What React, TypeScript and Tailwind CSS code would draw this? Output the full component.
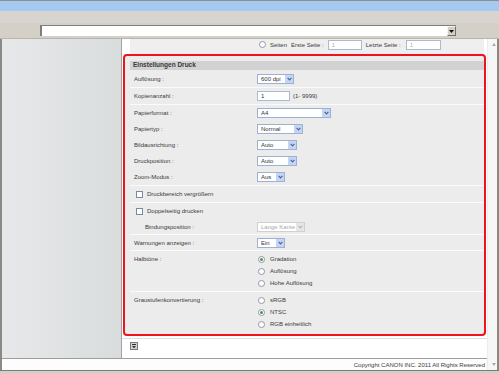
import clsx from "clsx";
import type { ReactNode } from "react";

function Chevron({ color }: { color: string }) {
  return (
    <svg width="5" height="4" viewBox="0 0 5 4">
      <path d="M0.6 0.8 L2.5 2.8 L4.4 0.8" fill="none" stroke={color} strokeWidth="1.2" />
    </svg>
  );
}

function Select({ value, width, disabled }: { value: string; width: string; disabled?: boolean }) {
  return (
    <div
      className={clsx(
        "flex h-[10px] border bg-white",
        width,
        disabled ? "border-[#d0d0d0] text-[#a8a8a8]" : "border-[#9db1d2] text-[#333]"
      )}
    >
      <span className="flex flex-1 items-center pl-[3px]">{value}</span>
      <span className={clsx("flex w-[8px] items-center justify-center", disabled ? "bg-[#e6e6e6]" : "bg-[#c6d5f4]")}>
        <Chevron color={disabled ? "#b4b4b4" : "#4b64a0"} />
      </span>
    </div>
  );
}

function Input({ value, width, muted }: { value: string; width: string; muted?: boolean }) {
  return (
    <div
      className={clsx(
        "flex h-[10px] items-center border border-[#a9bad4] bg-white pl-[3px]",
        width,
        muted ? "text-[#b0b0b0]" : "text-[#333]"
      )}
    >
      {value}
    </div>
  );
}

function Radio({ checked }: { checked?: boolean }) {
  return (
    <span className="flex h-[7px] w-[7px] shrink-0 items-center justify-center rounded-full border border-[#8e98a6] bg-white">
      {checked && <span className="h-[3px] w-[3px] rounded-full bg-[#3f9a45]" />}
    </span>
  );
}

function Checkbox() {
  return <span className="h-[7px] w-[7px] shrink-0 border border-[#7c8aa0] bg-white" />;
}

function Row({ label, h, indent, children }: { label: string; h: string; indent?: boolean; children?: ReactNode }) {
  return (
    <div className={clsx("flex items-center", h)}>
      <span className={clsx("w-[127px] shrink-0", indent ? "pl-[15px]" : "pl-[4px]")}>{label}</span>
      {children}
    </div>
  );
}

function RadioLine({ label, checked }: { label: string; checked?: boolean }) {
  return (
    <div className="flex h-[12px] items-center gap-[5px] pl-[1px]">
      <Radio checked={checked} />
      <span>{label}</span>
    </div>
  );
}

function Section({ className, children }: { className?: string; children: ReactNode }) {
  return <div className={clsx("border-b border-[#fbfbfb]", className)}>{children}</div>;
}

export default function App() {
  return (
    <div className="flex h-[374px] w-[499px] flex-col overflow-hidden bg-[#d4d0c8] font-['Liberation_Sans',Arial,sans-serif] text-[6px] leading-none text-[#3a3a3a]">
      <div className="h-[1px] bg-[#8f8f8f]" />
      <div className="h-[10px] bg-[#a6c9ef]" />
      <div className="h-[12px] bg-[#d8d4cf]" />

      {/* address select */}
      <div className="flex h-[16px] items-center border-b border-[#b9b5ae] pl-[40px]">
        <div className="flex h-[11px] w-[416px] border-l-2 border-t border-[#7d7d7d] bg-white">
          <div className="flex-1" />
          <div className="flex w-[9px] items-center justify-center border border-[#f4f4f4] border-b-[#6f6f6f] border-r-[#6f6f6f] bg-[#d4d0c8]">
            <svg width="5" height="3" viewBox="0 0 5 3">
              <path d="M0 0 H5 L2.5 3 Z" fill="#111" />
            </svg>
          </div>
        </div>
      </div>

      <div className="flex flex-1 border-x-2 border-[#8a8984]">
        <div className="flex flex-1 flex-col">
          <div className="flex flex-1">
            {/* left navigation */}
            <div className="w-[120px] border-r border-[#a3a3a3] bg-gradient-to-r from-[#e6e8ea] to-[#d9dcdd]" />

            {/* content */}
            <div className="flex flex-1 flex-col bg-white">
              <div className="ml-[8px] mr-[3px] h-[15px] bg-[#efefef]">
                <div className="flex h-[11px] items-center">
                  <span className="w-[127px] shrink-0" />
                  <span className="ml-[2px]">
                    <Radio />
                  </span>
                  <span className="ml-[4px]">Seiten</span>
                  <span className="ml-[4px]">Erste Seite :</span>
                  <span className="ml-[4px]">
                    <Input value="1" width="w-[34px]" muted />
                  </span>
                  <span className="ml-[4px]">Letzte Seite :</span>
                  <span className="ml-[5px]">
                    <Input value="1" width="w-[35px]" muted />
                  </span>
                </div>
              </div>

              {/* print settings */}
              <div className="ml-[1px] mr-[1px] flex h-[282px] flex-col rounded-[4px] border-2 border-[#f0131d] bg-[#ececec] pl-[5px] pt-[5px]">
                <div className="flex h-[9px] items-center bg-[#d2d2d2] pl-[3px] text-[6.5px] font-bold text-[#383838]">
                  Einstellungen Druck
                </div>
                <Section>
                  <Row label="Auflösung :" h="h-[17px]">
                    <Select value="600 dpi" width="w-[37px]" />
                  </Row>
                </Section>
                <Section>
                  <Row label="Kopienanzahl :" h="h-[16px]">
                    <Input value="1" width="w-[33px]" />
                    <span className="ml-[3px]">(1- 9999)</span>
                  </Row>
                </Section>
                <Section>
                  <Row label="Papierformat :" h="h-[16px]">
                    <Select value="A4" width="w-[74px]" />
                  </Row>
                  <Row label="Papiertyp :" h="h-[16px]">
                    <Select value="Normal" width="w-[46px]" />
                  </Row>
                  <Row label="Bildausrichtung :" h="h-[16px]">
                    <Select value="Auto" width="w-[40px]" />
                  </Row>
                  <Row label="Druckposition :" h="h-[16px]">
                    <Select value="Auto" width="w-[40px]" />
                  </Row>
                  <Row label="Zoom-Modus :" h="h-[16px]">
                    <Select value="Aus" width="w-[28px]" />
                  </Row>
                </Section>
                <Section>
                  <div className="flex h-[16px] items-center gap-[4px] pl-[6px]">
                    <Checkbox />
                    <span>Druckbereich vergrößern</span>
                  </div>
                </Section>
                <Section>
                  <div className="flex h-[16px] items-center gap-[4px] pl-[6px]">
                    <Checkbox />
                    <span>Doppelseitig drucken</span>
                  </div>
                  <Row label="Bindungsposition :" h="h-[15px]" indent>
                    <Select value="Lange Kante" width="w-[48px]" disabled />
                  </Row>
                </Section>
                <Section>
                  <Row label="Warnungen anzeigen :" h="h-[15px]">
                    <Select value="Ein" width="w-[28px]" />
                  </Row>
                </Section>
                <Section className="flex pb-[2px] pt-[2px]">
                  <span className="w-[127px] shrink-0 pl-[4px] pt-[3px]">Halbtöne :</span>
                  <div className="flex flex-col">
                    <RadioLine label="Gradation" checked />
                    <RadioLine label="Auflösung" />
                    <RadioLine label="Hohe Auflösung" />
                  </div>
                </Section>
                <div className="flex pt-[2px]">
                  <span className="w-[127px] shrink-0 pl-[4px] pt-[3px]">Graustufenkonvertierung :</span>
                  <div className="flex flex-col">
                    <RadioLine label="sRGB" />
                    <RadioLine label="NTSC" checked />
                    <RadioLine label="RGB einheitlich" />
                  </div>
                </div>
              </div>

              <div className="mt-[2px] h-px bg-[#dedede]" />
              <div className="pl-[8px] pt-[3px]">
                <svg width="8" height="8" viewBox="0 0 8 8">
                  <rect x="0.5" y="0.5" width="7" height="7" fill="#d2d2d2" stroke="#7b7b7b" />
                  <rect x="2" y="2" width="4" height="1" fill="#2e2e2e" />
                  <path d="M2 4 H6 L4 6.2 Z" fill="#2e2e2e" />
                </svg>
              </div>
            </div>
          </div>

          {/* footer */}
          <div className="flex h-[12px] items-center justify-end border-t border-[#9d9d9d] bg-[#fdfdfd] pr-[2px] text-[#3c3c3c]">
            Copyright CANON INC. 2011 All Rights Reserved
          </div>
        </div>

        {/* scrollbar */}
        <div className="flex w-[10px] flex-col items-center justify-between border-l border-[#ececec] bg-[#f6f6f6] py-[4px] pl-[2px]">
          <svg width="4" height="3" viewBox="0 0 4 3">
            <path d="M0 3 H4 L2 0 Z" fill="#a9a9a9" />
          </svg>
          <svg width="4" height="3" viewBox="0 0 4 3">
            <path d="M0 0 H4 L2 3 Z" fill="#a9a9a9" />
          </svg>
        </div>
      </div>
      <div className="h-[4px] border-t border-[#7b7b7b] bg-[#d4d0c8]" />
    </div>
  );
}
